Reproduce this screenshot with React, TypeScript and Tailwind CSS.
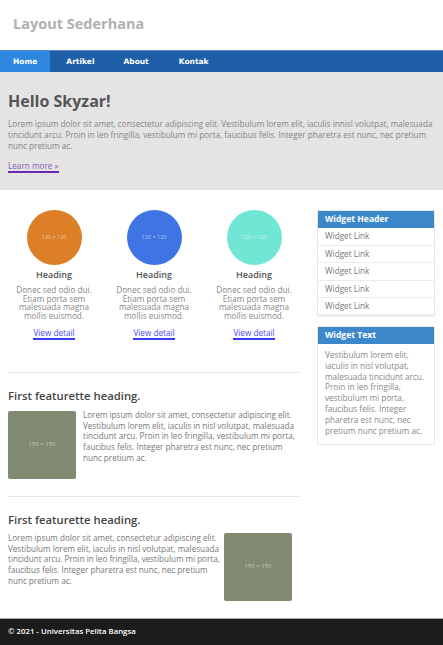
const font = { fontFamily: '"Open Sans", "Liberation Sans", sans-serif' }

const lorem =
  'Lorem ipsum dolor sit amet, consectetur adipiscing elit. Vestibulum lorem elit, iaculis in nisl volutpat, malesuada tincidunt arcu. Proin in leo fringilla, vestibulum mi porta, faucibus felis. Integer pharetra est nunc, nec pretium nunc pretium ac.'

const cols = [
  { color: 'bg-[#dc7f27]' },
  { color: 'bg-[#3e74e3]' },
  { color: 'bg-[#72e6d4]' },
]

function Placeholder({ side }: { side: 'left' | 'right' }) {
  return (
    <div
      className={`w-[68px] h-[68px] shrink-0 rounded-[2px] bg-[#7f8a70] flex items-center justify-center text-[6px] text-[#c3cab8] ${side === 'left' ? 'mr-[7px] mt-[1px]' : 'mr-[8px]'}`}
    >
      150 × 150
    </div>
  )
}

function Featurette({ side }: { side: 'left' | 'right' }) {
  return (
    <div>
      <h2 className="text-[11.3px] font-semibold text-[#444] leading-[14px]">First featurette heading.</h2>
      <div className={`flex items-start ${side === 'left' ? 'mt-[7px]' : 'mt-[6px]'}`}>
        {side === 'left' && <Placeholder side="left" />}
        <p className="text-[8.1px] leading-[10.8px] text-[#777] flex-1">{lorem}</p>
        {side === 'right' && <Placeholder side="right" />}
      </div>
    </div>
  )
}

export default function App() {
  return (
    <div className="w-[443px] min-h-[645px] bg-white flex flex-col" style={font}>
      <header className="h-[50px] flex items-center px-[13px]">
        <h1 className="text-[14.5px] font-bold text-[#b0b0b0] pb-[2px]">Layout Sederhana</h1>
      </header>

      <nav
        className="h-[22px] bg-[#1f5fa8] border-t border-[#5588c4] flex text-white text-[7.5px] font-bold"
        style={{ fontFamily: '"DejaVu Sans", Verdana, sans-serif' }}
      >
        <a className="px-[13px] bg-[#2d86df] flex items-center">Home</a>
        <a className="pl-[16px] pr-[14px] flex items-center">Artikel</a>
        <a className="px-[15px] flex items-center">About</a>
        <a className="px-[15px] flex items-center">Kontak</a>
      </nav>

      <section className="h-[118px] bg-[#e4e4e4] px-[8px] pt-[17px]">
        <h1 className="text-[16px] font-bold text-[#555] leading-[24px]">Hello Skyzar!</h1>
        <p className="mt-[5px] text-[8.2px] leading-[11px] text-[#858585]">
          Lorem ipsum dolor sit amet, consectetur adipiscing elit. Vestibulum lorem elit, iaculis innisl volutpat, malesuada
          tincidunt arcu. Proin in leo fringilla, vestibulum mi porta, faucibus felis. Integer pharetra est nunc, nec pretium
          nunc pretium ac.
        </p>
        <a className="inline-block mt-[8px] text-[8.2px] leading-[10px] text-[#8a5cb8] border-b-2 border-[#6a2bb0]">
          Learn more »
        </a>
      </section>

      <main className="flex-1 flex px-[8px] pt-[20px] pb-[16px] gap-[17px]">
        <div className="w-[292px]">
          <div className="grid grid-cols-3 -mx-[4px] w-[300px]">
            {cols.map((c, i) => (
              <div key={i} className="flex flex-col items-center text-center">
                <div
                  className={`w-[55px] h-[55px] rounded-full ${c.color} flex items-center justify-center text-[5.5px] text-white/60`}
                >
                  120 × 120
                </div>
                <h3 className="mt-[4px] text-[9px] font-semibold text-[#555] leading-[12px]">Heading</h3>
                <p className="mt-[5px] w-[86px] text-[8.2px] leading-[8.7px] text-[#888]">
                  Donec sed odio dui. Etiam porta sem malesuada magna mollis euismod.
                </p>
                <a className="mt-[7px] text-[8.2px] leading-[10px] text-[#4a4af0] border-b-2 border-[#3b3bf5]">
                  View detail
                </a>
              </div>
            ))}
          </div>

          <hr className="mt-[32px] border-[#e8e8e8]" />
          <div className="mt-[16px]">
            <Featurette side="left" />
          </div>

          <hr className="mt-[17px] border-[#e8e8e8]" />
          <div className="mt-[16px]">
            <Featurette side="right" />
          </div>
        </div>

        <aside className="w-[118px]">
          <div className="border border-[#e8e8e8] border-b-[3px] border-b-[#ececec]">
            <div className="h-[17px] bg-[#3d88cb] text-white text-[8.6px] font-bold flex items-center px-[7px]">
              Widget Header
            </div>
            {[0, 1, 2, 3, 4].map((i) => (
              <div
                key={i}
                className={`h-[17.2px] flex items-center px-[7px] text-[8.2px] text-[#777] ${i > 0 ? 'border-t border-[#ececec]' : ''}`}
              >
                Widget Link
              </div>
            ))}
          </div>

          <div className="mt-[9px] border border-[#e8e8e8]">
            <div className="h-[17px] bg-[#3d88cb] text-white text-[8.6px] font-bold flex items-center px-[7px]">
              Widget Text
            </div>
            <p className="px-[7px] pt-[6px] pb-[7px] text-[8.2px] leading-[10.85px] text-[#888]">
              Vestibulum lorem elit, iaculis in nisl volutpat, malesuada tincidunt arcu. Proin in leo fringilla, vestibulum
              mi porta, faucibus felis. Integer pharetra est nunc, nec pretium nunc pretium ac.
            </p>
          </div>
        </aside>
      </main>

      <footer className="h-[27px] bg-[#1c1c1c] border-t border-[#a8a8a8] flex items-center px-[8px] text-white text-[7.8px] font-semibold">
        © 2021 - Universitas Pelita Bangsa
      </footer>
    </div>
  )
}
